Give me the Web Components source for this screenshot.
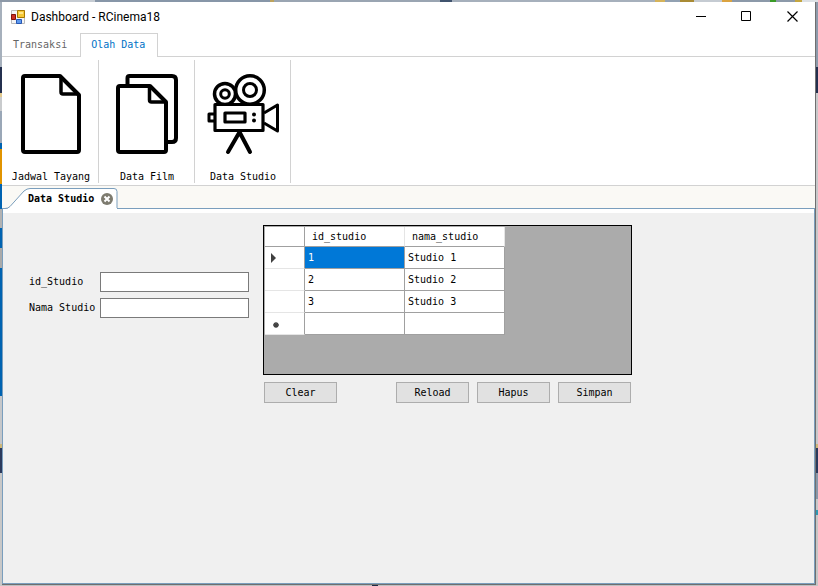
<!DOCTYPE html>
<html lang="id">
<head>
<meta charset="utf-8">
<title>Dashboard - RCinema18</title>
<style>
html, body { margin: 0; height: 100%; }
body { font: 10px/14px "DejaVu Sans Mono", "Liberation Mono", monospace; color: #000; }
</style>
</head>
<body>
<desk-top>
  <app-window caption="Dashboard - RCinema18">
    <ribbon-tabs slot="ribbon">
      <ribbon-tab>Transaksi</ribbon-tab>
      <ribbon-tab active>Olah Data</ribbon-tab>
    </ribbon-tabs>
    <ribbon-bar slot="ribbon">
      <ribbon-item label="Jadwal Tayang">
        <svg width="96" height="96" viewBox="0 0 96 96" fill="none" stroke="#000" stroke-width="4" stroke-linejoin="round"><path d="M22 16h35l19 19v55a2 2 0 0 1-2 2H22a2 2 0 0 1-2-2V18a2 2 0 0 1 2-2z"/><path d="M58 16v16q0 2 2 2h16" stroke-width="3.5"/></svg>
      </ribbon-item>
      <ribbon-item label="Data Film">
        <svg width="96" height="96" viewBox="0 0 96 96" fill="none" stroke="#000" stroke-width="4" stroke-linejoin="round"><path d="M28.500 26v-8q0-2 2-2H73q4 0 4 4v58q0 4-4 4h-6"/><path d="M21 26h30l16 16v48q0 2-2 2H21q-2 0-2-2V28q0-2 2-2z"/><path d="M50.500 26v14q0 2 2 2H67" stroke-width="3.5"/></svg>
      </ribbon-item>
      <ribbon-item label="Data Studio">
        <svg width="96" height="96" viewBox="0 0 96 96" fill="none" stroke="#000" stroke-width="4" stroke-linejoin="round"><circle cx="30" cy="34" r="10.5" stroke-width="3.5"/><circle cx="30" cy="34" r="4.3" stroke-width="3"/><circle cx="55" cy="30" r="14.3" stroke-width="3.5"/><circle cx="55" cy="30" r="6.5" stroke-width="3"/><path d="M20 44.500h48v26H20z" fill="#fff" stroke-width="3.2"/><path d="M30 53h20v9H30z" stroke-width="3.200"/><path d="M20 54h-6v7h6M69 53l13.500-8v26l-13.500-8" stroke-width="3"/><circle cx="59" cy="54.5" r="2" fill="#000" stroke="none"/><circle cx="59" cy="60.5" r="2" fill="#000" stroke="none"/><path d="M44 73l-11 19M45 73l10 19" stroke-linecap="round"/></svg>
      </ribbon-item>
    </ribbon-bar>
    <doc-panel label="Data Studio">
      <studio-form></studio-form>
      <data-view>
        <studio-grid></studio-grid>
        <action-button slot="first">Clear</action-button>
        <action-button slot="actions">Reload</action-button>
        <action-button slot="actions">Hapus</action-button>
        <action-button slot="actions">Simpan</action-button>
      </data-view>
    </doc-panel>
  </app-window>
</desk-top>

<script>
const define = (name, markup, setup) => customElements.define(name, class extends HTMLElement {
  connectedCallback() {
    if (this.shadowRoot) return;
    const root = this.attachShadow({ mode: "open" });
    root.innerHTML = markup;
    if (setup) setup(this, root);
  }
});

define("desk-top", `<style>
:host { display: flex; box-sizing: border-box; min-height: 100vh; padding: 2px 2px 1px;
  background:
    linear-gradient(90deg, #8d99a8 0 60px, #c5cbd2 60px 95px, #8796a8 95px 270px, #bca25d 270px 274px, #9aa5b2 274px 440px, #40536e 440px 452px, #a6b0bc 452px 655px, #d5b35a 655px 665px, #92a1b2 665px 680px, #a98b35 680px 694px, #c5cbd2 694px 722px, #dba340 722px 732px, #8c99a9 732px 770px, #3a9b26 770px 776px, #8c99a9 776px 795px, #c4a640 795px 802px, #dde1e5 802px) 0 0 / 100% 2px no-repeat,
    linear-gradient(90deg, transparent 0 372px, #202a44 372px 378px, transparent 378px) 0 100% / 100% 1px no-repeat,
    linear-gradient(#a6b0bc 0 67px, #24304f 67px 93px, #e2c98d 93px 97px, #c9cbcd 97px 111px, #9aa7b7 111px 143px, #0063b1 143px 149px, #e19400 149px 184px, #0063b1 184px 209px, #b2b2b2 209px 228px, #0063b1 228px 248px, #aaa 248px 268px, #0063b1 268px 396px, #c5c7ca 396px 444px, #cdb779 444px 448px, #2b3a5c 448px 473px, #c8c8c8 473px) 0 0 / 2px 100% no-repeat,
    linear-gradient(#8d9aab 0 67px, #24304f 67px 93px, #c8c8ca 93px 444px, #cdb779 444px 448px, #2b3a5c 448px 473px, #8997a8 473px 499px, #c6c8ca 499px 510px, #2d98b2 510px 515px, #c6c6c6 515px) 100% 0 / 2px 100% no-repeat,
    #bfc1c3; }
</style><slot></slot>`);

define("app-window", `<style>
:host { flex: 1; display: flex; flex-direction: column; background: #fff; border: solid #6f6f6f; border-width: 0 1px 1px 0; min-width: 0; }
header { display: flex; align-items: center; height: 29px; padding-left: 9px; font: 12px/16px Roboto, "Noto Sans", sans-serif; }
.logo { margin-right: 6px; }
h1 { flex: 1; margin: 0; font: inherit; }
button { width: 46px; height: 28px; padding: 0; border: 0; background: none; display: grid; place-items: center; }
</style>
<header>
<svg class="logo" width="14" height="14" viewBox="0 0 14 14"><path d="M.5.5h13v13H.5z" fill="#f5f5f5" stroke="#bbb"/><path d="M.5 4.5h4v5h-4z" fill="#cc2e22" stroke="#821109"/><path d="M6.5.5h7v7h-7z" fill="#f7c936" stroke="#a87800"/><path d="M8 2h4v2H8z" fill="#ffe48a"/><path d="M5.500 9.500h5v4h-5z" fill="#5d99ee" stroke="#2657b4"/></svg>
<h1></h1>
<button aria-label="Minimize"><svg width="11" height="11"><path d="M1 5.500h10" stroke="#000"/></svg></button>
<button aria-label="Maximize"><svg width="11" height="11"><path d="M.5.5h9v9h-9z" fill="none" stroke="#000"/></svg></button>
<button aria-label="Close"><svg width="11" height="11"><path d="M.5.5l10 10M10.500.5l-10 10" stroke="#000" stroke-width="1.200"/></svg></button>
</header><slot name="ribbon"></slot><slot></slot>`, (el, root) => {
  root.querySelector("h1").textContent = el.getAttribute("caption");
});

define("ribbon-tabs", `<style>
:host { display: flex; height: 26px; align-items: flex-end; box-shadow: inset 0 -1px #d2d2d2; }
</style><slot></slot>`);

define("ribbon-tab", `<style>
:host { display: block; }
button { display: block; box-sizing: border-box; height: 24px; padding: 0 12px 2px 10px; border: solid transparent; border-width: 1px 1px 0; background: none; font: inherit; color: #666; }
:host([active]) button { background: #fff; border-color: #d2d2d2; color: #0072c6; }
</style><button><slot></slot></button>`);

define("ribbon-bar", `<style>
:host { display: flex; height: 128px; border-bottom: 1px solid #d2d2d2; }
</style><slot></slot>`);

define("ribbon-item", `<style>
:host { display: block; padding-top: 3px; }
button { display: flex; flex-direction: column; align-items: center; gap: 14px; box-sizing: border-box; width: 97px; height: 123px; padding: 0 0 0 2px; border: 0; border-right: 1px solid #d2d2d2; margin-right: -1px; background: none; font: inherit; color: #000; overflow: hidden; }
.icon { display: block; height: 96px; }
</style><button><span class="icon"><slot></slot></span><span class="label"></span></button>`, (el, root) => {
  root.querySelector(".label").textContent = el.getAttribute("label");
});

define("doc-panel", `<style>
:host { flex: 1; display: flex; flex-direction: column; }
.strip { display: flex; height: 23px; align-items: flex-end; background: #faf9f5; box-shadow: inset 0 -1px #7a9ebd; }
.tab { display: grid; width: 116px; height: 21px; }
.tab > * { grid-area: 1 / 1; }
.row { display: flex; align-items: center; gap: 7px; padding: 1px 0 0 26px; }
button.name { border: 0; padding: 0; background: none; font: inherit; font-weight: bold; color: #000; }
button.close { border: 0; padding: 0; background: none; display: block; height: 12px; }
.page { flex: 1; display: flex; align-items: flex-start; gap: 14px; padding: 12px 12px 12px 25px; border: solid #7a9ebd; border-width: 0 1px 1px; background: linear-gradient(#fff 4px, #f0f0f0 4px); }
</style>
<div class="strip"><div class="tab">
<svg width="116" height="21"><path d="M0 20.500h3q3 0 5-2L22 3q3-2.500 6-2.500h84q3 0 3 3v17" fill="#fff" stroke="#7a9ebd"/><path d="M6 20.500h109" stroke="#fff"/></svg>
<div class="row"><button class="name"></button><button class="close" aria-label="Close tab"><svg width="12" height="12"><circle cx="6" cy="6" r="6" fill="#7d7b6f"/><path d="M3.500 3.500l5 5M8.500 3.500l-5 5" stroke="#fff" stroke-width="2"/></svg></button></div>
</div></div>
<div class="page"><slot></slot></div>`, (el, root) => {
  root.querySelector(".name").textContent = el.getAttribute("label");
});

define("studio-form", `<style>
:host { display: block; padding-top: 51px; }
form { display: grid; grid-template-columns: 67px 149px; column-gap: 4px; row-gap: 6px; align-items: center; margin: 0; padding-left: 1px; }
label { white-space: nowrap; }
input { box-sizing: border-box; width: 100%; height: 20px; margin: 0; padding: 0 3px; border: 1px solid #7a7a7a; background: #fff; font: inherit; }
</style>
<form><label for="id">id_Studio</label><input id="id" type="text"><label for="nama">Nama Studio</label><input id="nama" type="text"></form>`);

define("data-view", `<style>
:host { display: block; width: 369px; padding-top: 4px; }
.actions { display: flex; gap: 8px; padding: 7px 1px; }
.first { flex: 1; display: flex; }
</style><slot></slot><div class="actions"><div class="first"><slot name="first"></slot></div><slot name="actions"></slot></div>`);

define("action-button", `<style>
:host { display: block; }
button { box-sizing: border-box; width: 73px; height: 21px; padding: 0; border: 1px solid #adadad; background: #e1e1e1; font: inherit; color: #000; display: block; }
</style><button><slot></slot></button>`);

define("studio-grid", `<style>
:host { display: block; box-sizing: border-box; height: 150px; border: 1px solid #000; padding: 1px; background: #ababab; }
table { border-collapse: separate; border-spacing: 0; table-layout: fixed; width: 240px; background: #fff; }
th, td { box-sizing: border-box; height: 22px; padding: 0 3px; text-align: left; font-weight: normal; border: solid #a0a0a0; border-width: 0 1px 1px 0; }
thead th { height: 20px; padding: 0 7px; border-right-color: #e5e5e5; }
thead th:first-child, tbody th { border-right-color: #a0a0a0; }
tbody th { border-bottom-color: #e5e5e5; padding: 0 5px; }
svg { display: block; }
.sel { background: #0078d7; color: #fff; }
</style>
<table><colgroup><col style="width:40px"><col style="width:100px"><col style="width:100px"></colgroup>
<thead><tr><th aria-label="Row"></th><th scope="col">id_studio</th><th scope="col">nama_studio</th></tr></thead>
<tbody>
<tr><th scope="row" aria-label="Current row"><svg width="8" height="10"><path d="M1 0l5 5-5 5z" fill="#404040"/></svg></th><td class="sel">1</td><td>Studio 1</td></tr>
<tr><th scope="row"></th><td>2</td><td>Studio 2</td></tr>
<tr><th scope="row"></th><td>3</td><td>Studio 3</td></tr>
<tr><th scope="row" aria-label="New row"><svg width="12" height="10"><path d="M6 3v6M3 6h6M4 4l4 4M8 4l-4 4" stroke="#404040" stroke-width="1.300"/></svg></th><td></td><td></td></tr>
</tbody></table>`);
</script>
</body>
</html>
